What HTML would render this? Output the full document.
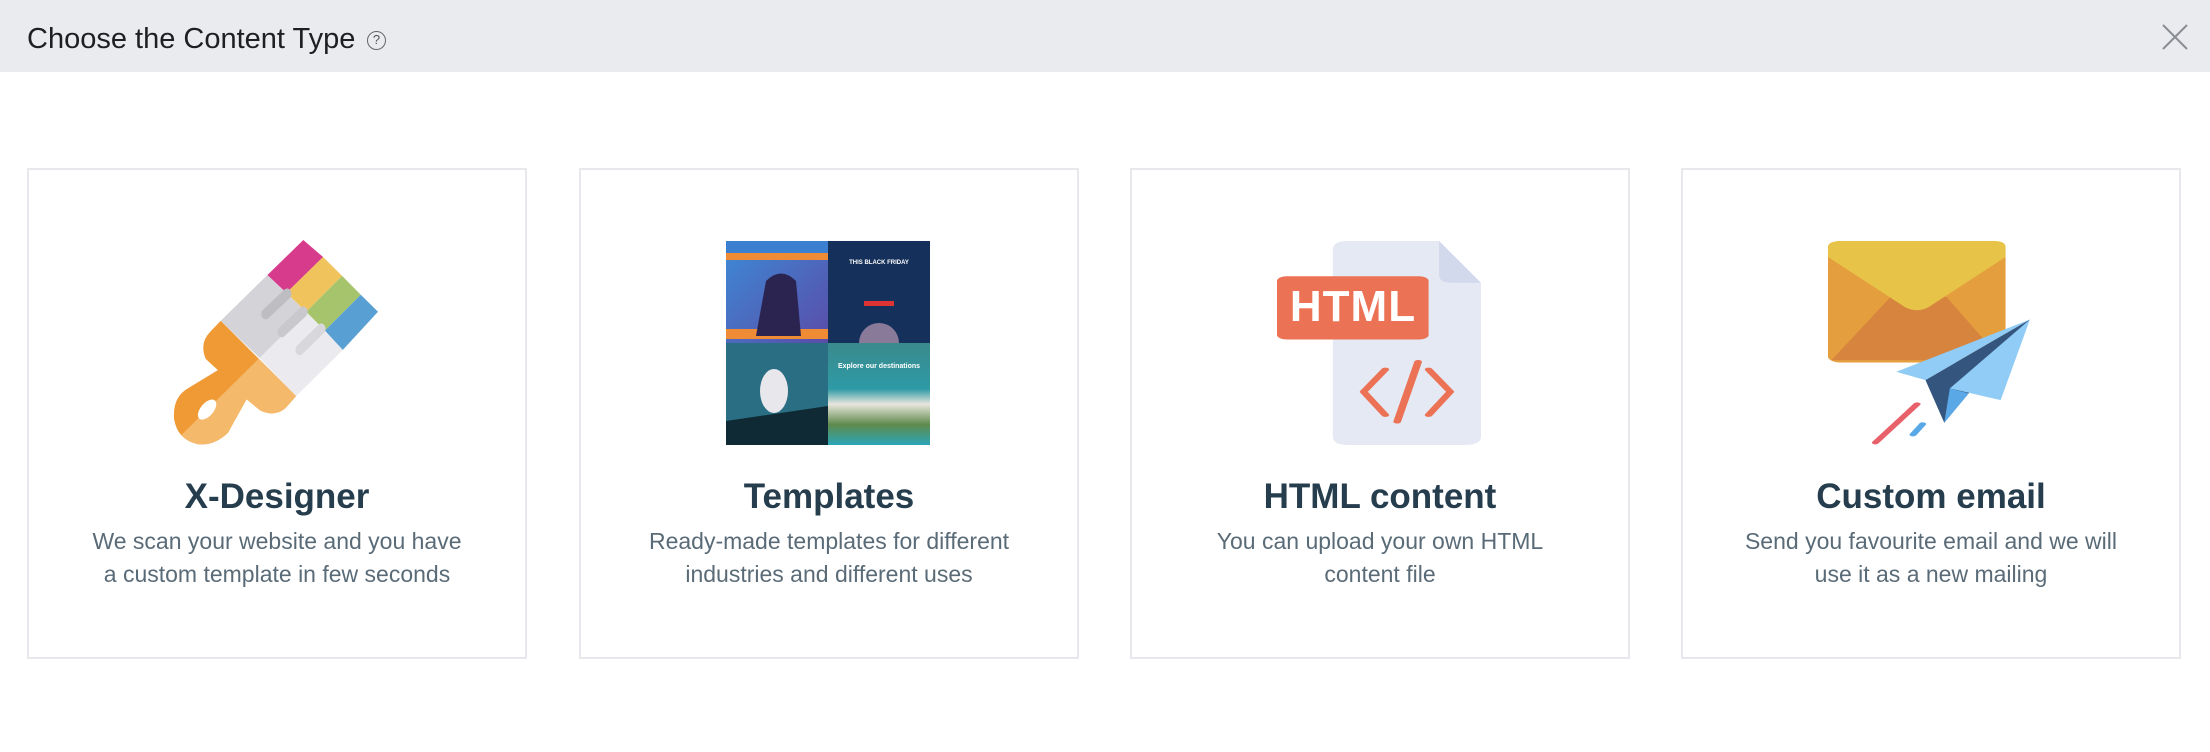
<!DOCTYPE html>
<html><head><meta charset="utf-8"><style>
*{margin:0;padding:0;box-sizing:border-box}
body{width:2210px;height:752px;background:#fff;font-family:"Liberation Sans",sans-serif;position:relative;overflow:hidden}
.hdr{position:absolute;left:0;top:0;width:2210px;height:72px;background:#EAEBEF}
.hdr h1{position:absolute;left:27px;top:23px;font-size:29px;font-weight:normal;color:#1d1f22}
.q{position:absolute;left:367px;top:31px;width:19px;height:19px;border:1.5px solid #666;border-radius:50%;font-size:13px;color:#555;text-align:center;line-height:16px}
.card{position:absolute;top:168px;width:500px;height:491px;border:2px solid #E8E8EC;background:#fff}
.t{position:absolute;left:0;width:100%;top:307px;text-align:center;font-size:35px;font-weight:bold;color:#263D4D}
.d{position:absolute;left:0;width:100%;top:355px;text-align:center;font-size:23px;line-height:33px;color:#5A6B78}
svg{position:absolute}
</style></head><body>
<div class="hdr"><h1>Choose the Content Type</h1><div class="q">?</div>
<svg style="left:2162px;top:24px" width="26" height="26" viewBox="0 0 26 26"><path d="M1 1L25 25M25 1L1 25" stroke="#8a8d92" stroke-width="2"/></svg></div>

<div class="card" style="left:27px">
<svg style="left:144px;top:70px" width="205" height="205" viewBox="487 540 571 457" preserveAspectRatio="none">
<defs><clipPath id="cp"><polygon points="728,803 1100,700 1100,1100 400,1100 510,975"/></clipPath></defs>
<path d="M620,720 L830,888 L800,915 Q770,935 730,920 L692,895 L640,970 Q600,1000 555,995 Q500,985 490,940 Q485,890 530,870 L612,830 L578,805 Q560,770 590,745 Z" fill="#F09A36"/>
<path clip-path="url(#cp)" d="M620,720 L830,888 L800,915 Q770,935 730,920 L692,895 L640,970 Q600,1000 555,995 Q500,985 490,940 Q485,890 530,870 L612,830 L578,805 Q560,770 590,745 Z" fill="#F4B96A"/>
<ellipse cx="582" cy="918" rx="30" ry="16" transform="rotate(-38 582 918)" fill="#fff"/>
<polygon points="620,720 750,618 858,700 728,803" fill="#D3D3D8"/>
<polygon points="728,803 858,700 960,785 830,888" fill="#EBEBEF"/>
<polygon points="750,618 850,540 905,578 803,658" fill="#D73B8B"/>
<polygon points="803,658 905,578 958,620 858,700" fill="#F0C35C"/>
<polygon points="858,700 958,620 1010,662 910,742" fill="#A6C46B"/>
<polygon points="910,742 1010,662 1058,700 960,785" fill="#589FD4"/>
<g stroke-linecap="round" stroke-width="24"><path d="M745,705L805,660" stroke="#BDBDC2"/><path d="M790,745L850,700" stroke="#C8C8CD"/><path d="M840,785L900,738" stroke="#D8D8DC"/></g>
</svg>
<div class="t">X-Designer</div>
<div class="d">We scan your website and you have<br>a custom template in few seconds</div></div>

<div class="card" style="left:579px">
<svg style="left:145px;top:71px" width="204" height="204" viewBox="0 0 204 204">
<defs><linearGradient id="g1" x1="0" y1="0" x2="1" y2="1"><stop offset="0" stop-color="#3d8ad6"/><stop offset="1" stop-color="#5a4ca8"/></linearGradient>
<linearGradient id="g2" x1="0" y1="0" x2="0" y2="1"><stop offset="0" stop-color="#3a8a8c"/><stop offset=".45" stop-color="#2e9aa6"/><stop offset=".6" stop-color="#e8e6dc"/><stop offset=".8" stop-color="#5e8a4c"/><stop offset="1" stop-color="#2aa6b8"/></linearGradient></defs>
<rect x="0" y="0" width="102" height="102" fill="url(#g1)"/>
<rect x="0" y="0" width="102" height="12" fill="#3b7fd0"/>
<rect x="0" y="12" width="102" height="7" fill="#ef8a35"/>
<rect x="0" y="88" width="102" height="10" fill="#ef8a35"/>
<path d="M40 40 Q55 25 70 40 L75 95 L30 95Z" fill="#2b2450"/>
<rect x="102" y="0" width="102" height="102" fill="#15305a"/>
<rect x="138" y="60" width="30" height="5" fill="#d33"/>
<circle cx="153" cy="102" r="20" fill="#8a7a9a"/>
<rect x="0" y="102" width="102" height="102" fill="#2a6e83"/>
<polygon points="0,180 102,165 102,204 0,204" fill="#0f2a35"/>
<ellipse cx="48" cy="150" rx="14" ry="22" fill="#e8e8ec"/>
<rect x="102" y="102" width="102" height="102" fill="url(#g2)"/>
<text x="153" y="127" font-size="7" font-weight="bold" fill="#fff" text-anchor="middle" font-family="Liberation Sans">Explore our destinations</text>
<text x="153" y="23" font-size="6" font-weight="bold" fill="#fff" text-anchor="middle" font-family="Liberation Sans">THIS BLACK FRIDAY</text>
</svg>
<div class="t">Templates</div>
<div class="d">Ready-made templates for different<br>industries and different uses</div></div>

<div class="card" style="left:1130px">
<svg style="left:145px;top:71px" width="204" height="204" viewBox="228 272 292 613" preserveAspectRatio="none">
<path d="M330,272 L460,272 L520,398 L520,860 Q520,885 495,885 L330,885 Q308,885 308,860 L308,297 Q308,272 330,272Z" fill="#E5E9F4"/>
<path d="M460,272 L520,398 L480,398 Q460,398 460,375Z" fill="#D3D9EC"/>
<rect x="228" y="378" width="217" height="190" rx="14" fill="#EC7255"/>
<g stroke="#EC7255" stroke-width="11" fill="none" stroke-linecap="round" stroke-linejoin="round"><path d="M383,658 L352,725 L383,795"/><path d="M445,658 L476,725 L445,795"/><path d="M430,635 L400,815"/></g>
</svg>
<div style="position:absolute;left:145px;top:112px;width:152px;text-align:center;font-size:44px;line-height:50px;font-weight:bold;color:#fff;letter-spacing:1px">HTML</div>
<div class="t">HTML content</div>
<div class="d">You can upload your own HTML<br>content file</div></div>

<div class="card" style="left:1681px">
<svg style="left:145px;top:71px" width="204" height="204" viewBox="1020 272 293 613" preserveAspectRatio="none">
<rect x="1020" y="272" width="255" height="365" rx="18" fill="#E59E3E"/>
<polygon points="1025,630 1110,440 1190,440 1270,630" fill="#D6843E"/>
<path d="M1020,320 L1020,290 Q1020,272 1040,272 L1258,272 Q1275,272 1275,290 L1275,320 L1165,470 Q1148,490 1130,470 Z" fill="#E7C447"/>
<polygon points="1118,665 1310,508 1160,690" fill="#90CCF5"/>
<polygon points="1160,690 1310,508 1187,818" fill="#34557E"/>
<polygon points="1195,715 1310,508 1268,750" fill="#90CCF5"/>
<polygon points="1187,818 1195,715 1222,730" fill="#5AA9E6"/>
<path d="M1148,762 L1088,878" stroke="#E8616A" stroke-width="10" stroke-linecap="round"/>
<path d="M1156,822 L1142,854" stroke="#5AA9E6" stroke-width="10" stroke-linecap="round"/>
</svg>
<div class="t">Custom email</div>
<div class="d">Send you favourite email and we will<br>use it as a new mailing</div></div>
</body></html>
